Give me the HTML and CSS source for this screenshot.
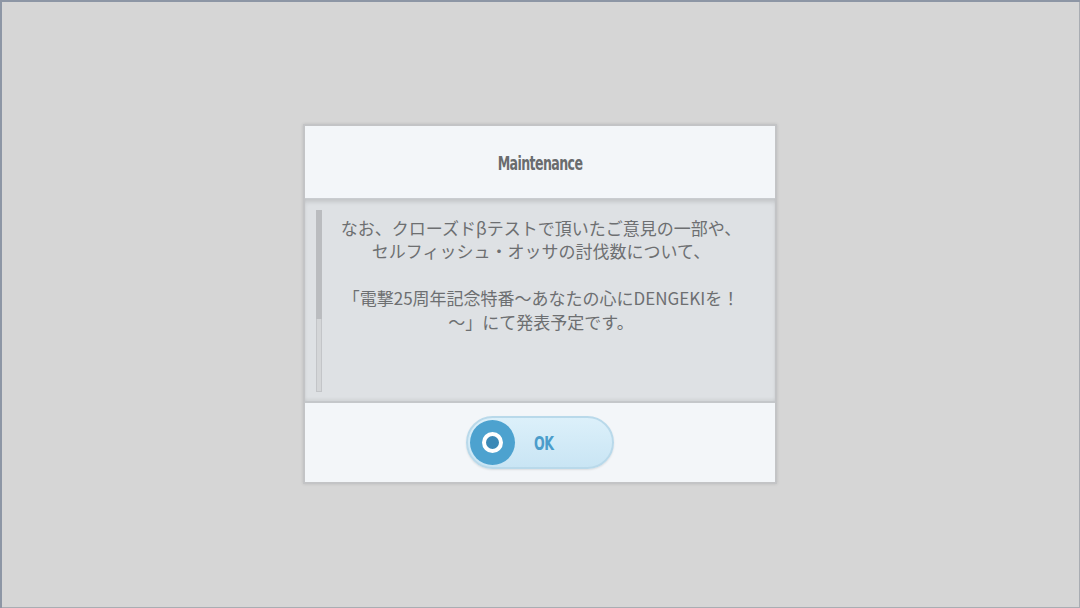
FILE: index.html
```html
<!DOCTYPE html>
<html lang="ja">
<head>
    <meta charset="UTF-8">
    <meta name="viewport" content="width=device-width, initial-scale=1.0">
    <title>Maintenance</title>
    <link rel="stylesheet" href="styles.css">
</head>
<body>
    <div class="screen">
        <div class="dialog">
            <div class="dialog-head">
                <h2 class="dialog-title">Maintenance</h2>
            </div>
            <div class="dialog-body">
                <div class="scrollbar"><div class="scroll-thumb"></div></div>
                <p class="message">
                    なお、クローズドβテストで頂いたご意見の一部や、<br>
                    セルフィッシュ・オッサの討伐数について、<br>
                    <br>
                    「電撃25周年記念特番～あなたの心にDENGEKIを！<br>
                    ～」にて発表予定です。
                </p>
            </div>
            <div class="dialog-foot">
                <button class="ok-btn" type="button">
                    <span class="ok-icon"><span class="ok-ring"></span></span>
                    <span class="ok-label">OK</span>
                </button>
            </div>
        </div>
    </div>
</body>
</html>
```

FILE: styles.css
```css
* {
    margin: 0;
    padding: 0;
    box-sizing: border-box;
}

body {
    width: 1080px;
    height: 608px;
    overflow: hidden;
    background: #d6d6d6;
    font-family: "Noto Sans CJK JP", "Noto Sans", sans-serif;
}

/* frame lines drawn as inset shadows so the dialog stays centred */
.screen {
    width: 1080px;
    height: 608px;
    display: flex;
    justify-content: center;
    align-items: center;
    box-shadow: inset 2px 2px 0 #8d96a5, inset -1px -1px 0 #a9adb3;
}

.dialog {
    width: 474px;
    height: 360px;
    margin-top: -1px;
    display: flex;
    flex-direction: column;
    background: #f3f6f9;
    border: 2px solid #c3c4c6;
    box-shadow: 0 0 3px rgba(0, 0, 0, 0.12);
}

.dialog-head {
    height: 72px;
    display: flex;
    justify-content: center;
    align-items: center;
    padding-top: 2px;
}

.dialog-title {
    font-family: "DejaVu Sans Condensed", "DejaVu Sans", sans-serif;
    font-stretch: condensed;
    font-weight: bold;
    font-size: 14px;
    letter-spacing: -0.6px;
    color: #6a6c6e;
    transform: scaleY(1.35);
}

.dialog-body {
    height: 205px;
    display: flex;
    background: #dee1e4;
    border-top: 1px solid #c9ccd0;
    border-bottom: 2px solid #c4c7ca;
    box-shadow: inset 0 4px 4px -1px rgba(0, 0, 0, 0.12), inset 0 -3px 3px -1px rgba(0, 0, 0, 0.06);
}

.scrollbar {
    width: 6px;
    margin: 11px 0 9px 11px;
    background: #d4d6d8;
    border: 1px solid #c3c5c8;
}

    .scroll-thumb {
        height: 61%;
        margin: -1px;
        background: #babcbf;
    }

.message {
    flex: 1;
    margin-right: 15px;
    padding-top: 17px;
    text-align: center;
    font-size: 17px;
    line-height: 23.5px;
    color: #6d6f71;
    white-space: nowrap;
}

.dialog-foot {
    flex: 1;
    display: flex;
    justify-content: center;
    align-items: center;
    padding-top: 1px;
}

.ok-btn {
    width: 148px;
    height: 53px;
    display: flex;
    align-items: center;
    padding: 0 2px;
    border: 2px solid #b9d9ea;
    border-radius: 27px;
    background: linear-gradient(#dcf0fa, #c9e5f4);
    box-shadow: 0 1px 2px rgba(0, 0, 0, 0.1);
    cursor: pointer;
}

.ok-icon {
    width: 45px;
    height: 45px;
    border-radius: 50%;
    background: #4da2cf;
    display: flex;
    justify-content: center;
    align-items: center;
}

.ok-ring {
    width: 21px;
    height: 21px;
    border-radius: 50%;
    border: 4px solid #ffffff;
    background: #3b88b6;
}

.ok-label {
    margin-left: 19px;
    font-family: "DejaVu Sans Condensed", "DejaVu Sans", sans-serif;
    font-stretch: condensed;
    font-weight: bold;
    font-size: 14px;
    letter-spacing: -0.5px;
    color: #4b9dcb;
    transform: scaleY(1.35);
}
```
